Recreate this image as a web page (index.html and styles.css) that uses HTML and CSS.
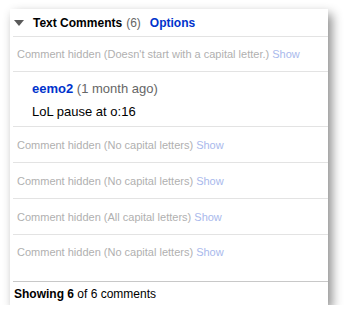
FILE: index.html
```html
<!DOCTYPE html>
<html lang="en">
<head>
    <meta charset="UTF-8">
    <title>Text Comments</title>
    <link rel="stylesheet" href="styles.css">
</head>
<body>
    <div class="panel">
        <div class="header">
            <svg class="toggle" width="10" height="6" viewBox="0 0 10 6">
                <polygon points="0,0 10,0 5,6" fill="#5a5a5a"/>
            </svg>
            <span class="title">Text Comments</span>
            <span class="count">(6)</span>
            <a class="options" href="#">Options</a>
        </div>

        <div class="row hidden-row first">
            <span>Comment hidden (Doesn't start with a capital letter.) <a class="show" href="#">Show</a></span>
        </div>

        <div class="row comment">
            <div class="meta"><a class="user" href="#">eemo2</a> <span class="age">(1 month ago)</span></div>
            <div class="body">LoL pause at o:16</div>
        </div>

        <div class="row hidden-row">
            <span>Comment hidden (No capital letters) <a class="show" href="#">Show</a></span>
        </div>
        <div class="row hidden-row">
            <span>Comment hidden (No capital letters) <a class="show" href="#">Show</a></span>
        </div>
        <div class="row hidden-row">
            <span>Comment hidden (All capital letters) <a class="show" href="#">Show</a></span>
        </div>
        <div class="row hidden-row last">
            <span>Comment hidden (No capital letters) <a class="show" href="#">Show</a></span>
        </div>

        <div class="footer"><b>Showing 6</b>&nbsp;of 6 comments</div>
    </div>
</body>
</html>
```

FILE: styles.css
```css
body {
    margin: 0;
    background: #fff;
    font-family: "Liberation Sans", Arial, sans-serif;
}
a {
    text-decoration: none;
}
.panel {
    width: 315px;
    margin: 9px 0 0 10px;
    padding-left: 3px;
    background: #fff;
    box-shadow: 4px 5px 10px rgba(0, 0, 0, 0.45);
}
.header {
    height: 27px;
    display: flex;
    align-items: center;
    font-size: 12px;
    font-weight: bold;
    border-bottom: 1px solid #e3e3e3;
}
.toggle {
    margin: 0 9px 0 1px;
}
.title {
    color: #000;
}
.count {
    color: #666;
    font-weight: normal;
    margin-left: 4px;
}
.options {
    color: #0033cc;
    margin-left: 9px;
}
.row {
    border-bottom: 1px solid #e3e3e3;
}
.hidden-row {
    height: 35px;
    display: flex;
    align-items: center;
    padding-left: 4px;
    font-size: 11px;
    color: #b0b0b0;
}
.hidden-row.first {
    height: 34px;
}
.hidden-row.last {
    height: 47px;
    align-items: flex-start;
    padding-top: 11px;
    box-sizing: border-box;
    border-bottom: 1px solid #c8c8c8;
}
.show {
    color: #a9b9ec;
}
.comment {
    height: 55px;
    padding-left: 19px;
    font-size: 13px;
    box-sizing: border-box;
    padding-top: 9px;
}
.user {
    color: #0033cc;
    font-weight: bold;
}
.age {
    color: #666;
}
.body {
    margin-top: 8px;
    color: #000;
}
.footer {
    height: 23px;
    padding-left: 1px;
    display: flex;
    align-items: center;
    font-size: 12px;
    color: #000;
}
```
